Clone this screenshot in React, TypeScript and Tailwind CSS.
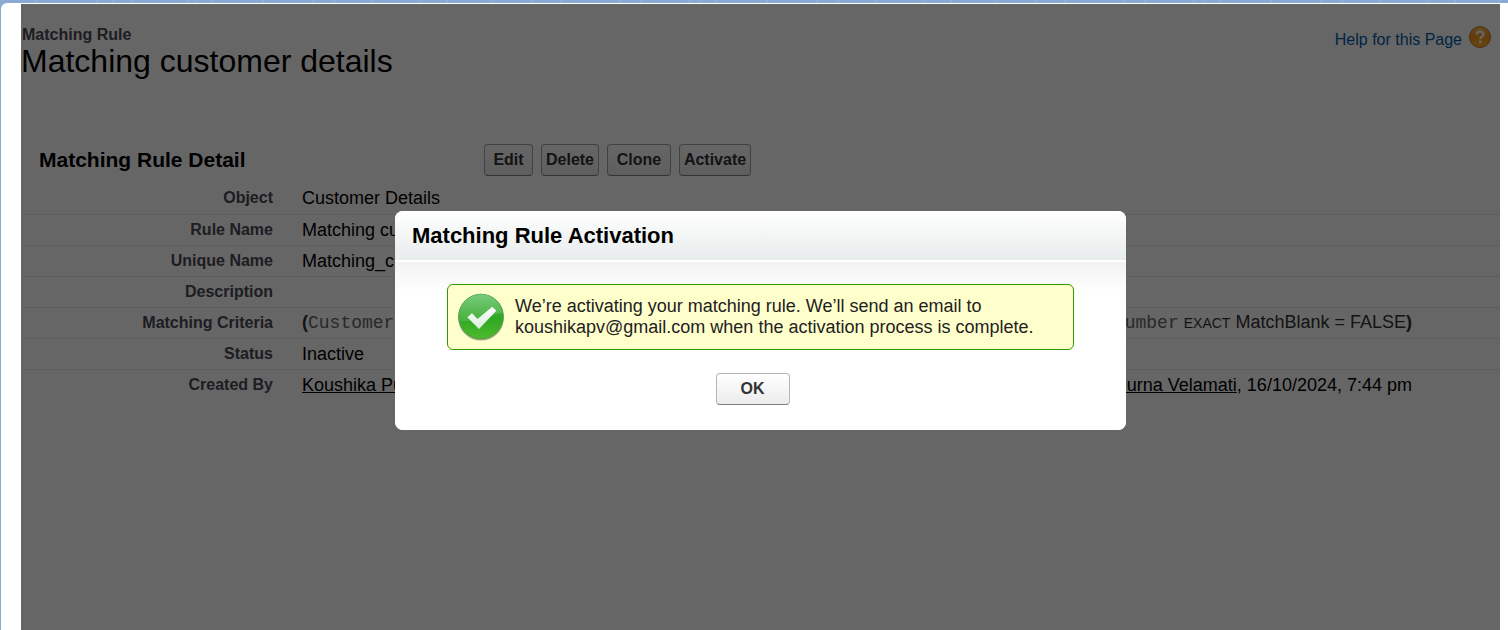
import type { ReactNode } from "react";

const actions = [
  { name: "Edit", width: "w-[49px]" },
  { name: "Delete", width: "w-[58px]" },
  { name: "Clone", width: "w-16" },
  { name: "Activate", width: "w-[72px]" },
];

const bannerMarks = [
  34, 96, 112, 131, 186, 196, 211, 262, 312, 333, 370, 420, 446, 492, 531, 560, 618, 640, 689, 700,
  715, 766, 816, 837, 874, 924, 950, 996, 1035, 1064, 1122, 1144, 1193, 1204, 1219, 1270, 1320,
  1341, 1378, 1428, 1454, 1499,
];

function BannerPattern() {
  return (
    <svg className="block h-[3px] w-full" viewBox="0 0 1508 3" preserveAspectRatio="none" aria-hidden="true">
      <rect width="1508" height="3" fill="#8aa9d3" />
      {bannerMarks.map((x) => (
        <path key={x} d={`M${x} 3L${x + 2} 0`} stroke="#9db8dc" strokeWidth="1" />
      ))}
    </svg>
  );
}

function HelpIcon() {
  return (
    <svg className="size-[22px]" viewBox="0 0 22 22" aria-hidden="true">
      <defs>
        <linearGradient id="help" x1="0" y1="0" x2="0" y2="1">
          <stop offset="0" stopColor="#ffb95a" />
          <stop offset="0.5" stopColor="#f8981c" />
          <stop offset="1" stopColor="#ffb62e" />
        </linearGradient>
      </defs>
      <circle cx="11" cy="11" r="10.5" fill="url(#help)" stroke="#b87a2a" />
      <path d="M7.8 8.4C7.8 4.6 14.4 4.6 14.4 8.3C14.4 10.800 11.2 10.600 11.2 13" fill="none" stroke="#fff" strokeWidth="2.2" />
      <rect x="10" y="14.6" width="2.4" height="2.4" fill="#fff" />
    </svg>
  );
}

function SuccessIcon() {
  return (
    <svg className="size-12 shrink-0" viewBox="0 0 48 48" aria-hidden="true">
      <defs>
        <linearGradient id="ball" x1="0" y1="0" x2="0" y2="1">
          <stop offset="0" stopColor="#4fb74c" />
          <stop offset="0.55" stopColor="#2fa822" />
          <stop offset="1" stopColor="#4dbb2c" />
        </linearGradient>
        <linearGradient id="gloss" x1="0" y1="0" x2="0" y2="1">
          <stop offset="0" stopColor="#86d08c" />
          <stop offset="1" stopColor="#4db544" />
        </linearGradient>
        <linearGradient id="tick" x1="0" y1="0" x2="0" y2="1">
          <stop offset="0" stopColor="#ffffff" />
          <stop offset="1" stopColor="#dceedd" />
        </linearGradient>
      </defs>
      <ellipse cx="24" cy="25" rx="22.8" ry="22.6" fill="#5f7a4c" opacity="0.6" />
      <circle cx="24" cy="23.5" r="22.3" fill="url(#ball)" stroke="#4f9a48" />
      <path d="M2.3 25A21.700 21.700 0 0 1 45.400 20C36 20 23 30 2.3 28Z" fill="url(#gloss)" opacity="0.75" />
      <path d="M10.300 24.300L15 20.300L20.500 26L35.300 13.700L39.300 17.700L22 36Z" fill="url(#tick)" />
    </svg>
  );
}

function Row({ label, children }: { label: string; children?: ReactNode }) {
  return (
    <tr className="h-[31px] border-b border-[#ececec] align-middle last:border-0">
      <th scope="row" className="w-[252px] p-0 text-right text-base leading-5 font-bold text-[#4a4a56]">
        {label}
      </th>
      <td className="py-0 pr-0 pl-[29px] text-lg leading-5">{children}</td>
    </tr>
  );
}

function Person() {
  return (
    <a href="#user" className="underline">
      Koushika Purna Velamati
    </a>
  );
}

function Criterion({ field }: { field: string }) {
  return (
    <span className="whitespace-nowrap text-[#333]">
      <b>(</b>
      <code className="font-['Liberation_Mono',monospace] text-lg leading-5 text-[#666]">{field}</code>{" "}
      <span className="text-sm leading-5">EXACT</span> MatchBlank = FALSE<b>)</b>
    </span>
  );
}

export default function App() {
  return (
    <div className="flex min-h-screen flex-col bg-[#8aa9d3] font-['Liberation_Sans',Arial,sans-serif] text-black">
      <BannerPattern />
      <div className="ml-px flex flex-1 flex-col rounded-tl-md bg-white pt-px pr-2 pl-5">
        <main className="relative flex-1">
          <header className="flex items-start justify-between pt-[21px] pr-[9px]">
            <div>
              <p className="pl-px text-base leading-5 font-bold text-[#4a4a56]">Matching Rule</p>
              <h1 className="text-[32px] leading-8">Matching customer details</h1>
            </div>
            <a href="#help" className="flex items-start gap-[7px] pt-px text-base text-[#015ba7]">
              <span className="pt-1 leading-5">Help for this Page</span>
              <HelpIcon />
            </a>
          </header>

          <section className="pt-[67px]">
            <div className="flex items-center pl-[18px]">
              <h2 className="w-[445px] text-[21px] leading-8 font-bold">Matching Rule Detail</h2>
              <div className="flex gap-2">
                {actions.map((action) => (
                  <button
                    key={action.name}
                    type="button"
                    className={`h-8 rounded border border-[#a5a5a5] border-b-[#7f7f7f] bg-linear-to-b from-white to-[#ececec] text-base font-bold text-[#333] ${action.width}`}
                  >
                    {action.name}
                  </button>
                ))}
              </div>
            </div>

            <table className="mt-[7px] w-full border-collapse">
              <tbody>
                <Row label="Object">Customer Details</Row>
                <Row label="Rule Name">Matching customer details</Row>
                <Row label="Unique Name">Matching_customer_details</Row>
                <Row label="Description" />
                <Row label="Matching Criteria">
                  <div className="flex justify-between pr-[88px]">
                    <Criterion field="Customer: Name" />
                    <Criterion field="Number" />
                  </div>
                </Row>
                <Row label="Status">Inactive</Row>
                <Row label="Created By">
                  <div className="flex justify-between pr-[88px]">
                    <Person />
                    <span>
                      <Person />, 16/10/2024, 7:44 pm
                    </span>
                  </div>
                </Row>
              </tbody>
            </table>
          </section>

          <div className="absolute inset-0 bg-black/60" />
          <div
            role="dialog"
            aria-modal="true"
            aria-labelledby="dialog-title"
            className="absolute inset-x-0 top-[207px] mx-auto w-[731px] overflow-hidden rounded-lg bg-white"
          >
            <h2
              id="dialog-title"
              className="h-[49px] bg-linear-to-b from-white to-[#e8ecec] pl-[17px] text-[22px] leading-[49px] font-bold"
            >
              Matching Rule Activation
            </h2>
            <div className="mt-[2px] bg-linear-to-b from-[#f3f3f3] to-white to-[30px] px-[52px] pt-[22px] pb-[25px]">
              <div className="flex items-center gap-[10px] rounded-md border border-[#390] bg-[#ffc] py-2 pl-[9px]">
                <SuccessIcon />
                <p className="text-lg leading-[21px] text-[#222]">
                  We’re activating your matching rule. We’ll send an email to
                  <br />
                  koushikapv@gmail.com when the activation process is complete.
                </p>
              </div>
              <div className="mt-[23px] flex justify-center pr-4">
                <button
                  type="button"
                  className="h-8 w-[74px] rounded border border-[#b5b5b5] border-b-[#7f7f7f] bg-linear-to-b from-white to-[#ececec] text-base font-bold text-[#333]"
                >
                  OK
                </button>
              </div>
            </div>
          </div>
        </main>
      </div>
    </div>
  );
}
